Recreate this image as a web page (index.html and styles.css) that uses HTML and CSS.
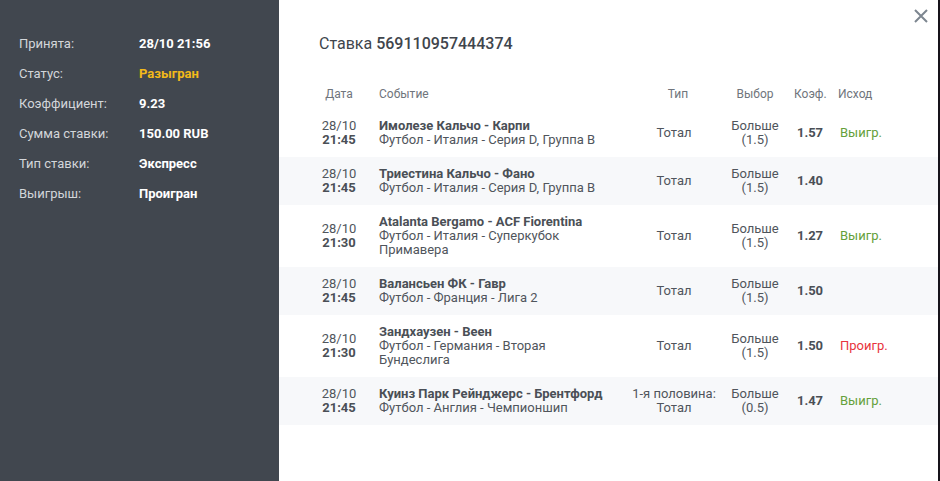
FILE: index.html
```html
<!DOCTYPE html>
<html lang="ru">
<head>
<meta charset="utf-8">
<title>Ставка</title>
<link rel="stylesheet" href="styles.css">
</head>
<body>
<div class="page">
  <aside class="side">
    <div class="info-row"><span class="label">Принята:</span><span class="value">28/10 21:56</span></div>
    <div class="info-row"><span class="label">Статус:</span><span class="value status">Разыгран</span></div>
    <div class="info-row"><span class="label">Коэффициент:</span><span class="value">9.23</span></div>
    <div class="info-row"><span class="label">Сумма ставки:</span><span class="value">150.00 RUB</span></div>
    <div class="info-row"><span class="label">Тип ставки:</span><span class="value">Экспресс</span></div>
    <div class="info-row"><span class="label">Выигрыш:</span><span class="value">Проигран</span></div>
  </aside>
  <main class="main">
    <button class="close" aria-label="Закрыть">
      <svg width="14" height="14" viewBox="0 0 14 14"><path d="M1 1L13 13M13 1L1 13" stroke="#7d8690" stroke-width="2" fill="none"/></svg>
    </button>
    <h1 class="title">Ставка <b>569110957444374</b></h1>
    <div class="table">
      <div class="row head">
        <div class="c-date">Дата</div>
        <div class="c-event">Событие</div>
        <div class="c-type">Тип</div>
        <div class="c-choice">Выбор</div>
        <div class="c-coef">Коэф.</div>
        <div class="c-res">Исход</div>
      </div>
      <div class="row">
        <div class="c-date">28/10<br><b>21:45</b></div>
        <div class="c-event"><b>Имолезе Кальчо - Карпи</b><br>Футбол - Италия - Серия D, Группа B</div>
        <div class="c-type">Тотал</div>
        <div class="c-choice">Больше<br>(1.5)</div>
        <div class="c-coef">1.57</div>
        <div class="c-res win">Выигр.</div>
      </div>
      <div class="row alt">
        <div class="c-date">28/10<br><b>21:45</b></div>
        <div class="c-event"><b>Триестина Кальчо - Фано</b><br>Футбол - Италия - Серия D, Группа B</div>
        <div class="c-type">Тотал</div>
        <div class="c-choice">Больше<br>(1.5)</div>
        <div class="c-coef">1.40</div>
        <div class="c-res"></div>
      </div>
      <div class="row">
        <div class="c-date">28/10<br><b>21:30</b></div>
        <div class="c-event"><b>Atalanta Bergamo - ACF Fiorentina</b><br>Футбол - Италия - Суперкубок Примавера</div>
        <div class="c-type">Тотал</div>
        <div class="c-choice">Больше<br>(1.5)</div>
        <div class="c-coef">1.27</div>
        <div class="c-res win">Выигр.</div>
      </div>
      <div class="row alt">
        <div class="c-date">28/10<br><b>21:45</b></div>
        <div class="c-event"><b>Валансьен ФК - Гавр</b><br>Футбол - Франция - Лига 2</div>
        <div class="c-type">Тотал</div>
        <div class="c-choice">Больше<br>(1.5)</div>
        <div class="c-coef">1.50</div>
        <div class="c-res"></div>
      </div>
      <div class="row">
        <div class="c-date">28/10<br><b>21:30</b></div>
        <div class="c-event"><b>Зандхаузен - Веен</b><br>Футбол - Германия - Вторая Бундеслига</div>
        <div class="c-type">Тотал</div>
        <div class="c-choice">Больше<br>(1.5)</div>
        <div class="c-coef">1.50</div>
        <div class="c-res lose">Проигр.</div>
      </div>
      <div class="row alt">
        <div class="c-date">28/10<br><b>21:45</b></div>
        <div class="c-event"><b>Куинз Парк Рейнджерс - Брентфорд</b><br>Футбол - Англия - Чемпионшип</div>
        <div class="c-type">1-я половина:<br>Тотал</div>
        <div class="c-choice">Больше<br>(0.5)</div>
        <div class="c-coef">1.47</div>
        <div class="c-res win">Выигр.</div>
      </div>
    </div>
  </main>
  <div class="edge"></div>
</div>
</body>
</html>
```

FILE: styles.css
```css
* { box-sizing: border-box; }
html, body { margin: 0; padding: 0; }
body {
  font-family: Roboto, "Noto Sans", sans-serif;
  background: #ffffff;
  width: 940px;
  height: 481px;
  overflow: hidden;
}
.page {
  display: flex;
  height: 481px;
}
.side {
  width: 279px;
  flex: none;
  background: #41474f;
  padding-top: 29px;
  padding-left: 19px;
}
.info-row {
  display: flex;
  height: 30px;
  line-height: 30px;
  font-size: 13px;
}
.label {
  width: 120px;
  color: #d3d6da;
}
.value {
  color: #ffffff;
  font-weight: 700;
}
.value.status { color: #f2b91a; }

.main {
  flex: 1;
  position: relative;
  background: #ffffff;
}
.edge {
  width: 2px;
  flex: none;
  background: #16131a;
}
.close {
  position: absolute;
  top: 9px;
  right: 10px;
  width: 14px;
  height: 14px;
  padding: 0;
  border: 0;
  background: none;
  display: block;
}
.close svg { display: block; }

.title {
  margin: 0;
  padding: 34px 0 0 40px;
  font-size: 16px;
  line-height: 20px;
  font-weight: 400;
  color: #40454c;
}
.title b { font-weight: 500; }

.table {
  margin-top: 30px;
}
.row {
  display: grid;
  grid-template-columns: 80px 253px 84px 78px 32px 1fr;
  align-items: center;
  padding: 10px 0 10px 20px;
  font-size: 13px;
  line-height: 14px;
  color: #50555c;
}
.row.alt { background: #f7f8fa; }
.row.head {
  font-size: 12px;
  line-height: 20px;
  padding: 0 0 5px 20px;
  color: #70757c;
}
.row b { font-weight: 700; color: #4a4f56; }
.c-date { text-align: center; }
.c-event { padding-right: 15px; }
.c-type { text-align: center; }
.row.head .c-type { padding-left: 8px; }
.c-choice { text-align: center; }
.c-coef { text-align: center; font-weight: 700; color: #4a4f56; }
.row.head .c-coef { font-weight: 400; color: #70757c; }
.c-res { padding-left: 14px; }
.row.head .c-res { padding-left: 12px; }
.win { color: #65a03a; }
.lose { color: #e8343d; }
```
